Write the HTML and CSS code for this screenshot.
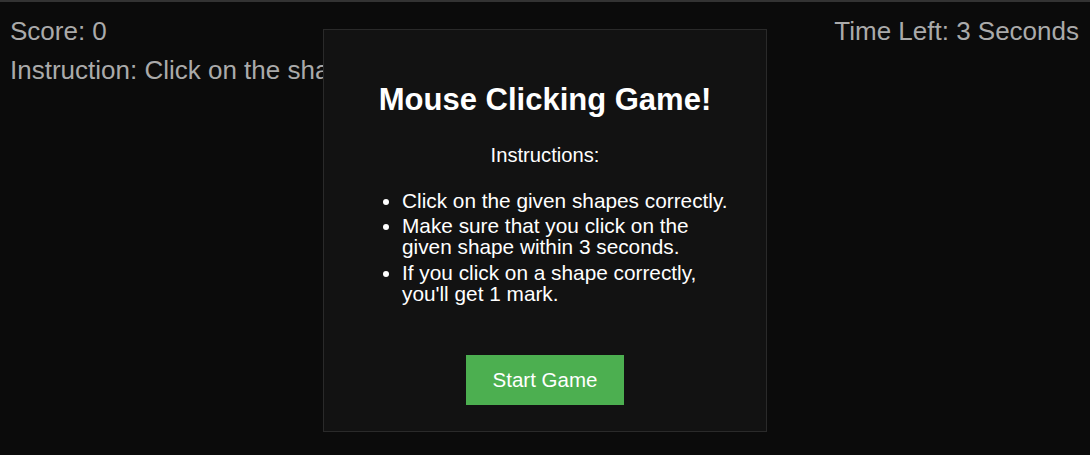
FILE: index.html
```html
<!DOCTYPE html>
<html lang="en">
<head>
<meta charset="utf-8">
<title>Mouse Clicking Game</title>
<link rel="stylesheet" href="styles.css">
</head>
<body>
  <div class="hud">
    <div class="hud-row">
      <div class="hud-text">Score: 0</div>
      <div class="hud-text">Time Left: 3 Seconds</div>
    </div>
    <div class="hud-text instruction">Instruction: Click on the shape</div>
  </div>

  <div class="modal">
    <h1 class="modal-title">Mouse Clicking Game!</h1>
    <p class="modal-sub">Instructions:</p>
    <ul class="modal-list">
      <li>Click on the given shapes correctly.</li>
      <li>Make sure that you click on the given shape within 3 seconds.</li>
      <li>If you click on a shape correctly, you'll get 1 mark.</li>
    </ul>
    <div class="modal-actions">
      <button class="start-btn" type="button">Start Game</button>
    </div>
  </div>
</body>
</html>
```

FILE: styles.css
```css
html, body {
  margin: 0;
  padding: 0;
}

body {
  background: #0b0b0b;
  border-top: 2px solid #333333;
  height: 453px;
  overflow: hidden;
  font-family: "Liberation Sans", Arial, sans-serif;
  position: relative;
}

.hud {
  padding: 14px 11px 0 10px;
}

.hud-row {
  display: flex;
  justify-content: space-between;
}

.hud-text {
  color: #aaaaaa;
  font-size: 26px;
  line-height: 30px;
  white-space: nowrap;
}

.instruction {
  margin-top: 9px;
}

.modal {
  position: absolute;
  top: 27px;
  left: 50%;
  transform: translateX(-50%);
  width: 366px;
  padding: 30px 38px 26px;
  background: #121212;
  border: 1px solid #2a2a2a;
  color: #ffffff;
  text-align: center;
}

.modal-title {
  margin: 21px 0 0;
  font-size: 31px;
  line-height: 37px;
  font-weight: bold;
}

.modal-sub {
  margin: 27px 0 0;
  font-size: 20.2px;
  line-height: 21px;
}

.modal-list {
  margin: 23.5px -4px 0 0;
  padding-left: 40px;
  text-align: left;
  font-size: 20.8px;
  line-height: 21px;
}

.modal-list li {
  margin-bottom: 4.5px;
}

.modal-list li:last-child {
  margin-bottom: 0;
}

.modal-actions {
  margin-top: 51.5px;
  display: flex;
  justify-content: center;
}

.start-btn {
  height: 50px;
  padding: 0 27px;
  border: none;
  background: #4caf50;
  color: #ffffff;
  font-family: "Liberation Sans", Arial, sans-serif;
  font-size: 20.5px;
  cursor: pointer;
}
```
